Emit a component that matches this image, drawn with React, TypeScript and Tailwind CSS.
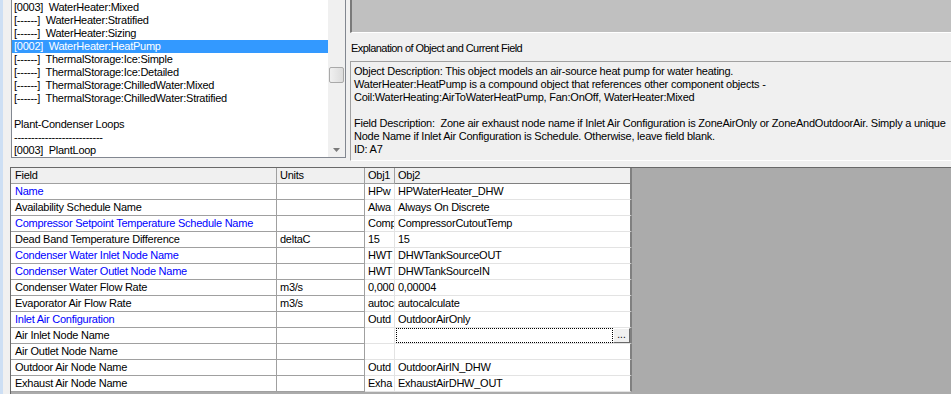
import React from "react";

const listItems = [
  "[0003]  WaterHeater:Mixed",
  "[------]  WaterHeater:Stratified",
  "[------]  WaterHeater:Sizing",
  "[0002]  WaterHeater:HeatPump",
  "[------]  ThermalStorage:Ice:Simple",
  "[------]  ThermalStorage:Ice:Detailed",
  "[------]  ThermalStorage:ChilledWater:Mixed",
  "[------]  ThermalStorage:ChilledWater:Stratified",
  "",
  "Plant-Condenser Loops",
  "--------------------------",
  "[0003]  PlantLoop",
];

type Row = {
  field: string;
  units: string;
  obj1: string;
  obj2: string;
  blue?: boolean;
  editing?: boolean;
};

const rows: Row[] = [
  { field: "Name", units: "", obj1: "HPw", obj2: "HPWaterHeater_DHW", blue: true },
  { field: "Availability Schedule Name", units: "", obj1: "Alwa", obj2: "Always On Discrete" },
  { field: "Compressor Setpoint Temperature Schedule Name", units: "", obj1: "Comp", obj2: "CompressorCutoutTemp", blue: true },
  { field: "Dead Band Temperature Difference", units: "deltaC", obj1: "15", obj2: "15" },
  { field: "Condenser Water Inlet Node Name", units: "", obj1: "HWT", obj2: "DHWTankSourceOUT", blue: true },
  { field: "Condenser Water Outlet Node Name", units: "", obj1: "HWT", obj2: "DHWTankSourceIN", blue: true },
  { field: "Condenser Water Flow Rate", units: "m3/s", obj1: "0,000", obj2: "0,00004" },
  { field: "Evaporator Air Flow Rate", units: "m3/s", obj1: "autoc", obj2: "autocalculate" },
  { field: "Inlet Air Configuration", units: "", obj1: "Outd", obj2: "OutdoorAirOnly", blue: true },
  { field: "Air Inlet Node Name", units: "", obj1: "", obj2: "", editing: true },
  { field: "Air Outlet Node Name", units: "", obj1: "", obj2: "" },
  { field: "Outdoor Air Node Name", units: "", obj1: "Outd", obj2: "OutdoorAirIN_DHW" },
  { field: "Exhaust Air Node Name", units: "", obj1: "Exha", obj2: "ExhaustAirDHW_OUT" },
];

export default function App() {
  return (
    <div
      className="w-[951px] h-[394px] overflow-hidden bg-[#f0f0f0] flex text-black"
      style={{ fontFamily: '"Liberation Sans", Arial, sans-serif' }}>
      {/* left window edge */}
      <div className="w-[3px] shrink-0 bg-[#cddff4]" />

      <div className="flex-1 flex flex-col min-w-0">
        {/* top half */}
        <div className="flex h-[161px] shrink-0">
          {/* class list */}
          <div className="ml-[8px] w-[335px] h-[158px] shrink-0 flex border border-t-0 border-[#828790] bg-white">
            <div className="flex-1 pt-[1px] text-[11px] leading-[13px] tracking-[-0.25px]">
              {listItems.map((item, i) => (
                <div
                  key={i}
                  className={
                    i === 3
                      ? "h-[13px] pl-[2px] whitespace-pre bg-[#3399ff] text-white"
                      : "h-[13px] pl-[2px] whitespace-pre"
                  }>
                  {item}
                </div>
              ))}
            </div>
            <div className="w-[17px] shrink-0 bg-[#f0f0f0] flex flex-col items-center">
              <div className="mt-[67px] w-[15px] h-[16px] rounded-[2px] border border-[#a9a9a9] bg-gradient-to-r from-[#f0f0f0] to-[#dcdcdc]" />
              <div className="flex-1" />
              <svg width="7" height="4" viewBox="0 0 7 4" className="mb-[5px]">
                <path d="M0 0 H7 L3.5 4 Z" fill="#7a7a7a" />
              </svg>
            </div>
          </div>

          {/* right panel */}
          <div className="ml-[4px] flex-1 flex flex-col min-w-0">
            <div className="h-[33px] shrink-0 bg-[#c0c0c0] border-l-2 border-l-[#7a7a7a] border-b border-b-white" />
            <div className="mt-[9px] h-[13px] pl-[1px] text-[11px] leading-[13px] tracking-[-0.55px] whitespace-nowrap">
              Explanation of Object and Current Field
            </div>
            <div className="mt-[6px] h-[102px] border-t border-l border-[#a0a0a0] border-b border-b-white bg-[#f0f0f0] pl-[3px] pt-[3px] text-[11px] leading-[13px] tracking-[-0.23px] whitespace-pre overflow-hidden">
              <div>Object Description: This object models an air-source heat pump for water heating.</div>
              <div>WaterHeater:HeatPump is a compound object that references other component objects -</div>
              <div>Coil:WaterHeating:AirToWaterHeatPump, Fan:OnOff, WaterHeater:Mixed</div>
              <div>&nbsp;</div>
              <div>Field Description:  Zone air exhaust node name if Inlet Air Configuration is ZoneAirOnly or ZoneAndOutdoorAir. Simply a unique</div>
              <div>Node Name if Inlet Air Configuration is Schedule. Otherwise, leave field blank.</div>
              <div>ID: A7</div>
            </div>
          </div>
        </div>

        {/* field grid */}
        <div className="mt-[6px] ml-[7px] flex-1 border-t border-l border-[#696969] bg-[#ababab] overflow-hidden text-[11px] tracking-[-0.25px]">
          <div className="flex h-[16px]">
            <div className="w-[266px] shrink-0 bg-[#f0f0f0] border-r border-b border-[#a0a0a0] pl-[4px] leading-[15px]">Field</div>
            <div className="w-[88px] shrink-0 bg-[#f0f0f0] border-r border-b border-[#a0a0a0] pl-[3px] leading-[15px]">Units</div>
            <div className="w-[30px] shrink-0 bg-[#f0f0f0] border-r border-b border-[#a0a0a0] pl-[3px] leading-[15px]">Obj1</div>
            <div className="w-[237px] shrink-0 bg-[#f0f0f0] border-r-2 border-b border-[#808080] pl-[3px] leading-[15px]">Obj2</div>
          </div>
          {rows.map((r) => (
            <div key={r.field} className="flex h-[16px]">
              <div
                className={
                  r.blue
                    ? "w-[266px] shrink-0 bg-white border-r border-b border-[#a0a0a0] pl-[4px] leading-[15px] text-[#0000ff] whitespace-nowrap overflow-hidden"
                    : "w-[266px] shrink-0 bg-white border-r border-b border-[#a0a0a0] pl-[4px] leading-[15px] whitespace-nowrap overflow-hidden"
                }>
                {r.field}
              </div>
              <div className="w-[88px] shrink-0 bg-white border-r border-b border-[#a0a0a0] pl-[3px] leading-[15px]">
                {r.units}
              </div>
              <div className="w-[30px] shrink-0 bg-white border-r border-b border-[#e3e3e3] pl-[3px] leading-[15px] whitespace-nowrap overflow-hidden">
                {r.obj1}
              </div>
              <div className="w-[237px] shrink-0 bg-white border-r-2 border-r-[#808080] border-b border-b-[#e3e3e3] leading-[15px] whitespace-nowrap overflow-hidden">
                {r.editing ? (
                  <div className="flex h-[15px]">
                    <div className="flex-1 ml-[1px] border border-dotted border-black" />
                    <div className="w-[17px] h-[15px] bg-[#f0f0f0] border border-[#ffffff] border-r-[#696969] border-b-[#696969] text-[10px] leading-[11px] text-center tracking-normal">
                      ...
                    </div>
                  </div>
                ) : (
                  <span className="pl-[3px]">{r.obj2}</span>
                )}
              </div>
            </div>
          ))}
        </div>
      </div>
    </div>
  );
}
